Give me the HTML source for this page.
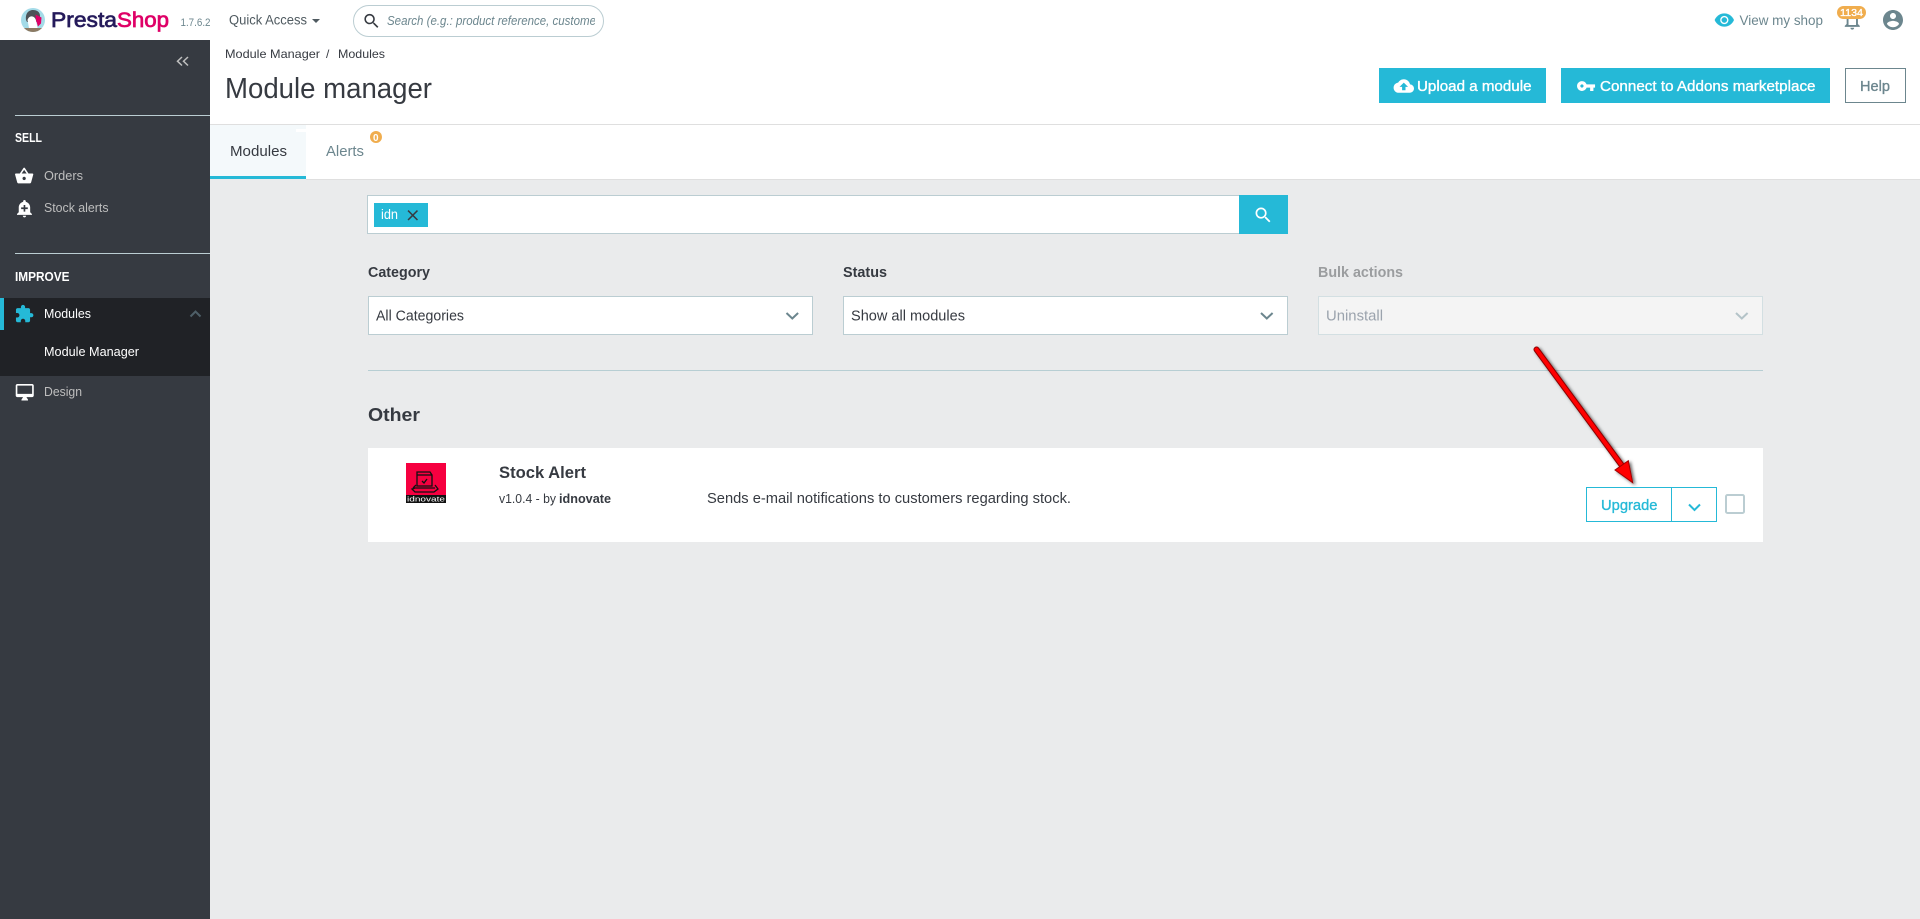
<!DOCTYPE html>
<html lang="en">
<head>
<meta charset="utf-8">
<title>Module manager</title>
<style>
html,body{margin:0;padding:0;width:1920px;height:919px;overflow:hidden;background:#eaebec}
svg{display:block}
text{font-family:"Liberation Sans",Arial,sans-serif;fill:#363a41}
.sb{stroke-width:.35;stroke:currentColor}
.side{fill:#bebebe;font-size:13px}
.w{fill:#fff}
.g{fill:#6c868e}
.b{font-weight:700}
</style>
</head>
<body>
<svg width="1920" height="919" viewBox="0 0 1920 919" xmlns="http://www.w3.org/2000/svg">
<defs>
<filter id="sh" x="-20%" y="-20%" width="140%" height="140%"><feDropShadow dx="2" dy="1.5" stdDeviation="1.6" flood-color="#000" flood-opacity=".6"/></filter>
<clipPath id="sc"><rect x="385" y="6" width="210" height="30"/></clipPath>
<clipPath id="pc"><circle cx="33" cy="20" r="12"/></clipPath>
</defs>

<!-- page background -->
<rect width="1920" height="919" fill="#eaebec"/>

<!-- header -->
<rect width="1920" height="40" fill="#fff"/>
<g clip-path="url(#pc)">
<rect x="21" y="8" width="24" height="24" fill="#a4dbe8"/>
<path d="M26 20c-1-7 3-10 7-10s7 2 7 6l-1 6H27z" fill="#4d5358"/>
<path d="M27.500 20c1-3 3-4 5-3.500 2 .5 3 2 3.500 4l1.500 7.500H29z" fill="#fff"/>
<path d="M35.500 14.500l6 3-.5 6-3 3-2-6.500z" fill="#df0067"/>
<rect x="24" y="28" width="18" height="5" fill="#8c7a63"/>
</g>
<text x="51" y="27" font-size="21" textLength="66" lengthAdjust="spacingAndGlyphs" style="fill:#251b5b;stroke:#251b5b;stroke-width:.7">Presta</text>
<text x="117" y="27" font-size="21" textLength="52" lengthAdjust="spacingAndGlyphs" style="fill:#df0067;stroke:#df0067;stroke-width:.7">Shop</text>
<text x="180.500" y="26" font-size="11" class="g" textLength="30" lengthAdjust="spacingAndGlyphs">1.7.6.2</text>
<text x="229" y="24.500" font-size="13.500" textLength="78" lengthAdjust="spacingAndGlyphs" style="fill:#4f5a60">Quick Access</text>
<path d="M312 19h8l-4 4z" fill="#4f5a60"/>
<rect x="353.500" y="5.500" width="250" height="31" rx="15.500" fill="#fff" stroke="#bbcdd2"/>
<path transform="translate(362 11.500) scale(.8)" fill="#363a41" d="M15.500 14h-.79l-.28-.27C15.410 12.590 16 11.110 16 9.500 16 5.910 13.090 3 9.500 3S3 5.910 3 9.500 5.910 16 9.500 16c1.610 0 3.090-.59 4.230-1.570l.27.28v.79l5 4.990L20.490 19l-4.990-5zm-6 0C7.010 14 5 11.990 5 9.500S7.010 5 9.500 5 14 7.010 14 9.500 11.990 14 9.500 14z"/>
<g clip-path="url(#sc)"><text x="387" y="25" font-size="12.500" font-style="italic" class="g" textLength="209" lengthAdjust="spacingAndGlyphs">Search (e.g.: product reference, custome</text></g>

<path transform="translate(1714 9.700) scale(.86)" fill="#25b9d7" stroke="#25b9d7" stroke-width=".5" d="M12 4.500C7 4.500 2.730 7.610 1 12c1.730 4.390 6 7.500 11 7.500s9.270-3.110 11-7.500c-1.730-4.390-6-7.500-11-7.500zM12 17c-2.760 0-5-2.240-5-5s2.240-5 5-5 5 2.240 5 5-2.240 5-5 5zm0-8c-1.660 0-3 1.340-3 3s1.340 3 3 3 3-1.340 3-3-1.340-3-3-3z"/>
<text x="1739.500" y="25" font-size="13.500" class="g" textLength="83.500" lengthAdjust="spacingAndGlyphs">View my shop</text>
<path transform="translate(1841 9) scale(.94)" fill="#6c868e" d="M12 22c1.100 0 2-.9 2-2h-4c0 1.100.89 2 2 2zm6-6v-5c0-3.070-1.640-5.640-4.500-6.320V4c0-.83-.67-1.500-1.500-1.500s-1.500.67-1.500 1.500v.68C7.630 5.360 6 7.920 6 11v5l-2 2v1h16v-1l-2-2zm-2 1H8v-6c0-2.480 1.510-4.500 4-4.500s4 2.020 4 4.500v6z"/>
<rect x="1837" y="6" width="29" height="13" rx="6.500" fill="#f0ad4e"/>
<text x="1840" y="16.200" font-size="10.500" class="w sb" textLength="23" lengthAdjust="spacingAndGlyphs" style="color:#fff">1134</text>
<path transform="translate(1881 8)" fill="#6c868e" d="M12 2C6.480 2 2 6.480 2 12s4.480 10 10 10 10-4.480 10-10S17.520 2 12 2zm0 3c1.660 0 3 1.340 3 3s-1.340 3-3 3-3-1.340-3-3 1.340-3 3-3zm0 14.200c-2.500 0-4.710-1.280-6-3.220.03-1.990 4-3.080 6-3.080 1.990 0 5.970 1.090 6 3.080-1.290 1.940-3.500 3.220-6 3.220z"/>

<!-- page head -->
<rect x="210" y="40" width="1710" height="84" fill="#fff"/>
<rect x="210" y="124" width="1710" height="1" fill="#dfdfdf"/>
<text x="225" y="58" font-size="12" textLength="95" lengthAdjust="spacingAndGlyphs">Module Manager</text>
<text x="326" y="58" font-size="12">/</text>
<text x="338" y="58" font-size="12" textLength="47" lengthAdjust="spacingAndGlyphs">Modules</text>
<text x="225" y="98" font-size="29" textLength="207" lengthAdjust="spacingAndGlyphs">Module manager</text>

<rect x="1379" y="68" width="167" height="35" fill="#25b9d7"/>
<path transform="translate(1393.600 75.800) scale(.85)" fill="#fff" d="M19.350 10.040C18.670 6.590 15.640 4 12 4 9.110 4 6.600 5.640 5.350 8.040 2.340 8.360 0 10.910 0 14c0 3.310 2.690 6 6 6h13c2.760 0 5-2.240 5-5 0-2.640-2.050-4.780-4.650-4.960zM14 13v4h-4v-4H7l5-5 5 5h-3z"/>
<text x="1417" y="91" font-size="14.500" class="w sb" textLength="114.500" lengthAdjust="spacingAndGlyphs" style="color:#fff">Upload a module</text>
<rect x="1561" y="68" width="269" height="35" fill="#25b9d7"/>
<path transform="translate(1576.200 76.200) scale(.82)" fill="#fff" d="M12.650 10C11.830 7.670 9.610 6 7 6c-3.310 0-6 2.690-6 6s2.690 6 6 6c2.610 0 4.830-1.670 5.650-4H17v4h4v-4h2v-4H12.650zM7 14c-1.100 0-2-.9-2-2s.9-2 2-2 2 .9 2 2-.9 2-2 2z"/>
<text x="1600" y="91" font-size="14.500" class="w sb" textLength="215.500" lengthAdjust="spacingAndGlyphs" style="color:#fff">Connect to Addons marketplace</text>
<rect x="1845.500" y="68.500" width="60" height="34" fill="#fff" stroke="#6c868e"/>
<text x="1860" y="91" font-size="14.500" class="g sb" textLength="30" lengthAdjust="spacingAndGlyphs" style="color:#6c868e">Help</text>

<!-- tabs -->
<rect x="210" y="125" width="1710" height="54" fill="#fff"/>
<rect x="210" y="125" width="96" height="52" fill="#f4f9fb"/>
<rect x="296" y="129" width="10" height="3" fill="#fff"/>
<rect x="210" y="176" width="96" height="3" fill="#25b9d7"/>
<rect x="306" y="179" width="1614" height="1" fill="#dfdfdf"/>
<text x="230" y="156" font-size="14.500" textLength="57" lengthAdjust="spacingAndGlyphs">Modules</text>
<text x="326" y="156" font-size="14.500" class="g" textLength="38" lengthAdjust="spacingAndGlyphs">Alerts</text>
<circle cx="376" cy="137" r="6" fill="#f0ad4e"/>
<text x="373" y="140.800" font-size="10" class="w b">0</text>

<!-- sidebar -->
<rect y="40" width="210" height="879" fill="#363a41"/>
<path d="M182 57l-4.500 4.200 4.500 4.300M188 57l-4.500 4.200 4.500 4.300" fill="none" stroke="#bebebe" stroke-width="1.500"/>
<rect x="15" y="115" width="195" height="1" fill="#bbcdd2"/>
<text x="15" y="142" font-size="12.500" class="w b" textLength="27" lengthAdjust="spacingAndGlyphs">SELL</text>
<path transform="translate(14.200 166) scale(.83)" fill="#fff" d="M17.210 9l-4.380-6.560c-.19-.28-.51-.42-.83-.42-.32 0-.64.14-.83.43L6.790 9H2c-.55 0-1 .45-1 1 0 .09.01.18.04.27l2.540 9.270c.23.84 1 1.460 1.920 1.460h13c.92 0 1.690-.62 1.930-1.460l2.540-9.270L23 10c0-.55-.45-1-1-1h-4.790zM9 9l3-4.400L15 9H9zm3 8c-1.100 0-2-.9-2-2s.9-2 2-2 2 .9 2 2-.9 2-2 2z"/>
<text x="44" y="180" class="side" textLength="39" lengthAdjust="spacingAndGlyphs">Orders</text>
<path transform="translate(14.500 198.300) scale(.83)" fill="#fff" d="M10.010 21.010c0 1.100.89 1.990 1.990 1.990s1.990-.89 1.990-1.990h-3.980zm8.870-4.190V11c0-3.250-2.250-5.970-5.290-6.690v-.72C13.590 2.710 12.880 2 12 2s-1.590.71-1.590 1.590v.72C7.370 5.030 5.120 7.750 5.120 11v5.820L3 18.940V20h18v-1.060l-2.120-2.120zM16 13.010h-3v3h-2v-3H8V11h3V8h2v3h3v2.010z"/>
<text x="44" y="212" class="side" textLength="64.500" lengthAdjust="spacingAndGlyphs">Stock alerts</text>
<rect x="15" y="253" width="195" height="1" fill="#bbcdd2"/>
<text x="15" y="281" font-size="12.500" class="w b" textLength="54.500" lengthAdjust="spacingAndGlyphs">IMPROVE</text>
<rect y="298" width="210" height="78" fill="#202226"/>
<rect y="298" width="4" height="32" fill="#25b9d7"/>
<path transform="translate(14.300 304) scale(.83)" fill="#25b9d7" d="M20.500 11H19V7c0-1.100-.9-2-2-2h-4V3.500C13 2.120 11.880 1 10.500 1S8 2.120 8 3.500V5H4c-1.100 0-1.990.9-1.990 2v3.800H3.500c1.490 0 2.700 1.210 2.700 2.700s-1.210 2.700-2.700 2.700H2V20c0 1.100.9 2 2 2h3.800v-1.500c0-1.490 1.210-2.700 2.700-2.700 1.490 0 2.700 1.210 2.700 2.700V22H17c1.100 0 2-.9 2-2v-4h1.500c1.380 0 2.500-1.120 2.500-2.500S21.880 11 20.500 11z"/>
<text x="44" y="318" font-size="13" class="w" textLength="47" lengthAdjust="spacingAndGlyphs">Modules</text>
<path d="M190.500 316.500l5-5 5 5" fill="none" stroke="#4e5f68" stroke-width="2"/>
<text x="44" y="356" font-size="13" class="w" textLength="95" lengthAdjust="spacingAndGlyphs">Module Manager</text>
<path transform="translate(14.900 382.400) scale(.82)" fill="#fff" d="M21 2H3c-1.100 0-2 .9-2 2v12c0 1.100.9 2 2 2h7l-2 3v1h8v-1l-2-3h7c1.100 0 2-.9 2-2V4c0-1.100-.9-2-2-2zm0 12H3V4h18v10z"/>
<text x="44" y="396" class="side" textLength="38" lengthAdjust="spacingAndGlyphs">Design</text>

<!-- search filter -->
<rect x="367.500" y="195.500" width="872" height="38" fill="#fff" stroke="#bbcdd2"/>
<rect x="1239" y="195" width="49" height="39" fill="#25b9d7"/>
<path transform="translate(1253 205) scale(.85)" fill="#fff" d="M15.500 14h-.79l-.28-.27C15.410 12.590 16 11.110 16 9.500 16 5.910 13.090 3 9.500 3S3 5.910 3 9.500 5.910 16 9.500 16c1.610 0 3.090-.59 4.230-1.570l.27.28v.79l5 4.990L20.490 19l-4.990-5zm-6 0C7.010 14 5 11.990 5 9.500S7.010 5 9.500 5 14 7.010 14 9.500 11.990 14 9.500 14z"/>
<rect x="374" y="203" width="54" height="24" fill="#25b9d7"/>
<text x="381" y="219" font-size="13.500" class="w" textLength="17" lengthAdjust="spacingAndGlyphs">idn</text>
<path transform="translate(403.750 206.300) scale(.75)" fill="#363a41" d="M19 6.410L17.590 5 12 10.590 6.410 5 5 6.410 10.590 12 5 17.590 6.410 19 12 13.410 17.590 19 19 17.590 13.410 12z"/>

<!-- filters -->
<text x="368" y="277" font-size="14.500" class="b" textLength="62" lengthAdjust="spacingAndGlyphs">Category</text>
<rect x="368.500" y="296.500" width="444" height="38" fill="#fff" stroke="#bbcdd2"/>
<text x="376" y="320.500" font-size="14.500" textLength="88" lengthAdjust="spacingAndGlyphs">All Categories</text>
<path d="M786.500 313l5.800 5.500 5.800-5.500" fill="none" stroke="#6c868e" stroke-width="2"/>
<text x="843" y="277" font-size="14.500" class="b" textLength="44" lengthAdjust="spacingAndGlyphs">Status</text>
<rect x="843.500" y="296.500" width="444" height="38" fill="#fff" stroke="#bbcdd2"/>
<text x="851" y="320.500" font-size="14.500" textLength="114" lengthAdjust="spacingAndGlyphs">Show all modules</text>
<path d="M1261 313l5.800 5.500 5.800-5.500" fill="none" stroke="#6c868e" stroke-width="2"/>
<text x="1318" y="277" font-size="14.500" class="b" textLength="85" lengthAdjust="spacingAndGlyphs" style="fill:#9b9d9f">Bulk actions</text>
<rect x="1318.500" y="296.500" width="444" height="38" fill="#f4f4f4" stroke="#d3dfe2"/>
<text x="1326" y="320.500" font-size="14.500" textLength="57" lengthAdjust="spacingAndGlyphs" style="fill:#9ba3ad">Uninstall</text>
<path d="M1736 313l5.800 5.500 5.800-5.500" fill="none" stroke="#b4c3c8" stroke-width="2"/>
<rect x="368" y="370" width="1395" height="1" fill="#b7ced3"/>

<!-- module list -->
<text x="368" y="421" font-size="18" class="b" textLength="52" lengthAdjust="spacingAndGlyphs">Other</text>
<rect x="368" y="448" width="1395" height="94" fill="#fff"/>
<rect x="406" y="463" width="40" height="40" fill="#f60040"/>
<rect x="406" y="495" width="40" height="8" fill="#111"/>
<g fill="none" stroke="#111" stroke-width="1.300">
<path d="M417 472h13l2 3v11h-15z"/>
<path d="M417 475h15"/>
<path d="M413 488l3-3M435 485l3 4-4 3h-19l-3-3 3-1h20"/>
<path d="M422 481l2 2 3-4"/>
</g>
<text x="407" y="501.500" font-size="7.500" class="w" textLength="38" lengthAdjust="spacingAndGlyphs">idnovate</text>
<text x="499" y="478" font-size="16.500" class="b" textLength="87" lengthAdjust="spacingAndGlyphs">Stock Alert</text>
<text x="499" y="503" font-size="12.500" textLength="57" lengthAdjust="spacingAndGlyphs">v1.0.4 - by</text>
<text x="559" y="503" font-size="12.500" class="b" textLength="52" lengthAdjust="spacingAndGlyphs">idnovate</text>
<text x="707" y="503" font-size="14.500" textLength="364" lengthAdjust="spacingAndGlyphs">Sends e-mail notifications to customers regarding stock.</text>

<rect x="1586.500" y="487.500" width="130" height="34" fill="#fff" stroke="#25b9d7"/>
<rect x="1671" y="487" width="1" height="35" fill="#25b9d7"/>
<text x="1601" y="510" font-size="14.500" class="sb" textLength="56.500" lengthAdjust="spacingAndGlyphs" style="fill:#25b9d7;color:#25b9d7">Upgrade</text>
<path d="M1689 504.500l5.500 5.500 5.500-5.500" fill="none" stroke="#25b9d7" stroke-width="2"/>
<rect x="1726" y="495" width="18" height="18" rx="1.500" fill="#fff" stroke="#bbcdd2" stroke-width="2"/>

<!-- annotation arrow -->
<g filter="url(#sh)">
<line x1="1536.500" y1="349.500" x2="1623" y2="467" stroke="#8b0000" stroke-width="6" stroke-linecap="round"/>
<line x1="1536.500" y1="349.500" x2="1623" y2="467" stroke="#f00" stroke-width="4" stroke-linecap="round"/>
<path d="M1632.700 482.700L1615 470 1628.300 460.700z" fill="#f00" stroke="#a00000" stroke-width="1"/>
</g>
</svg>
</body>
</html>
